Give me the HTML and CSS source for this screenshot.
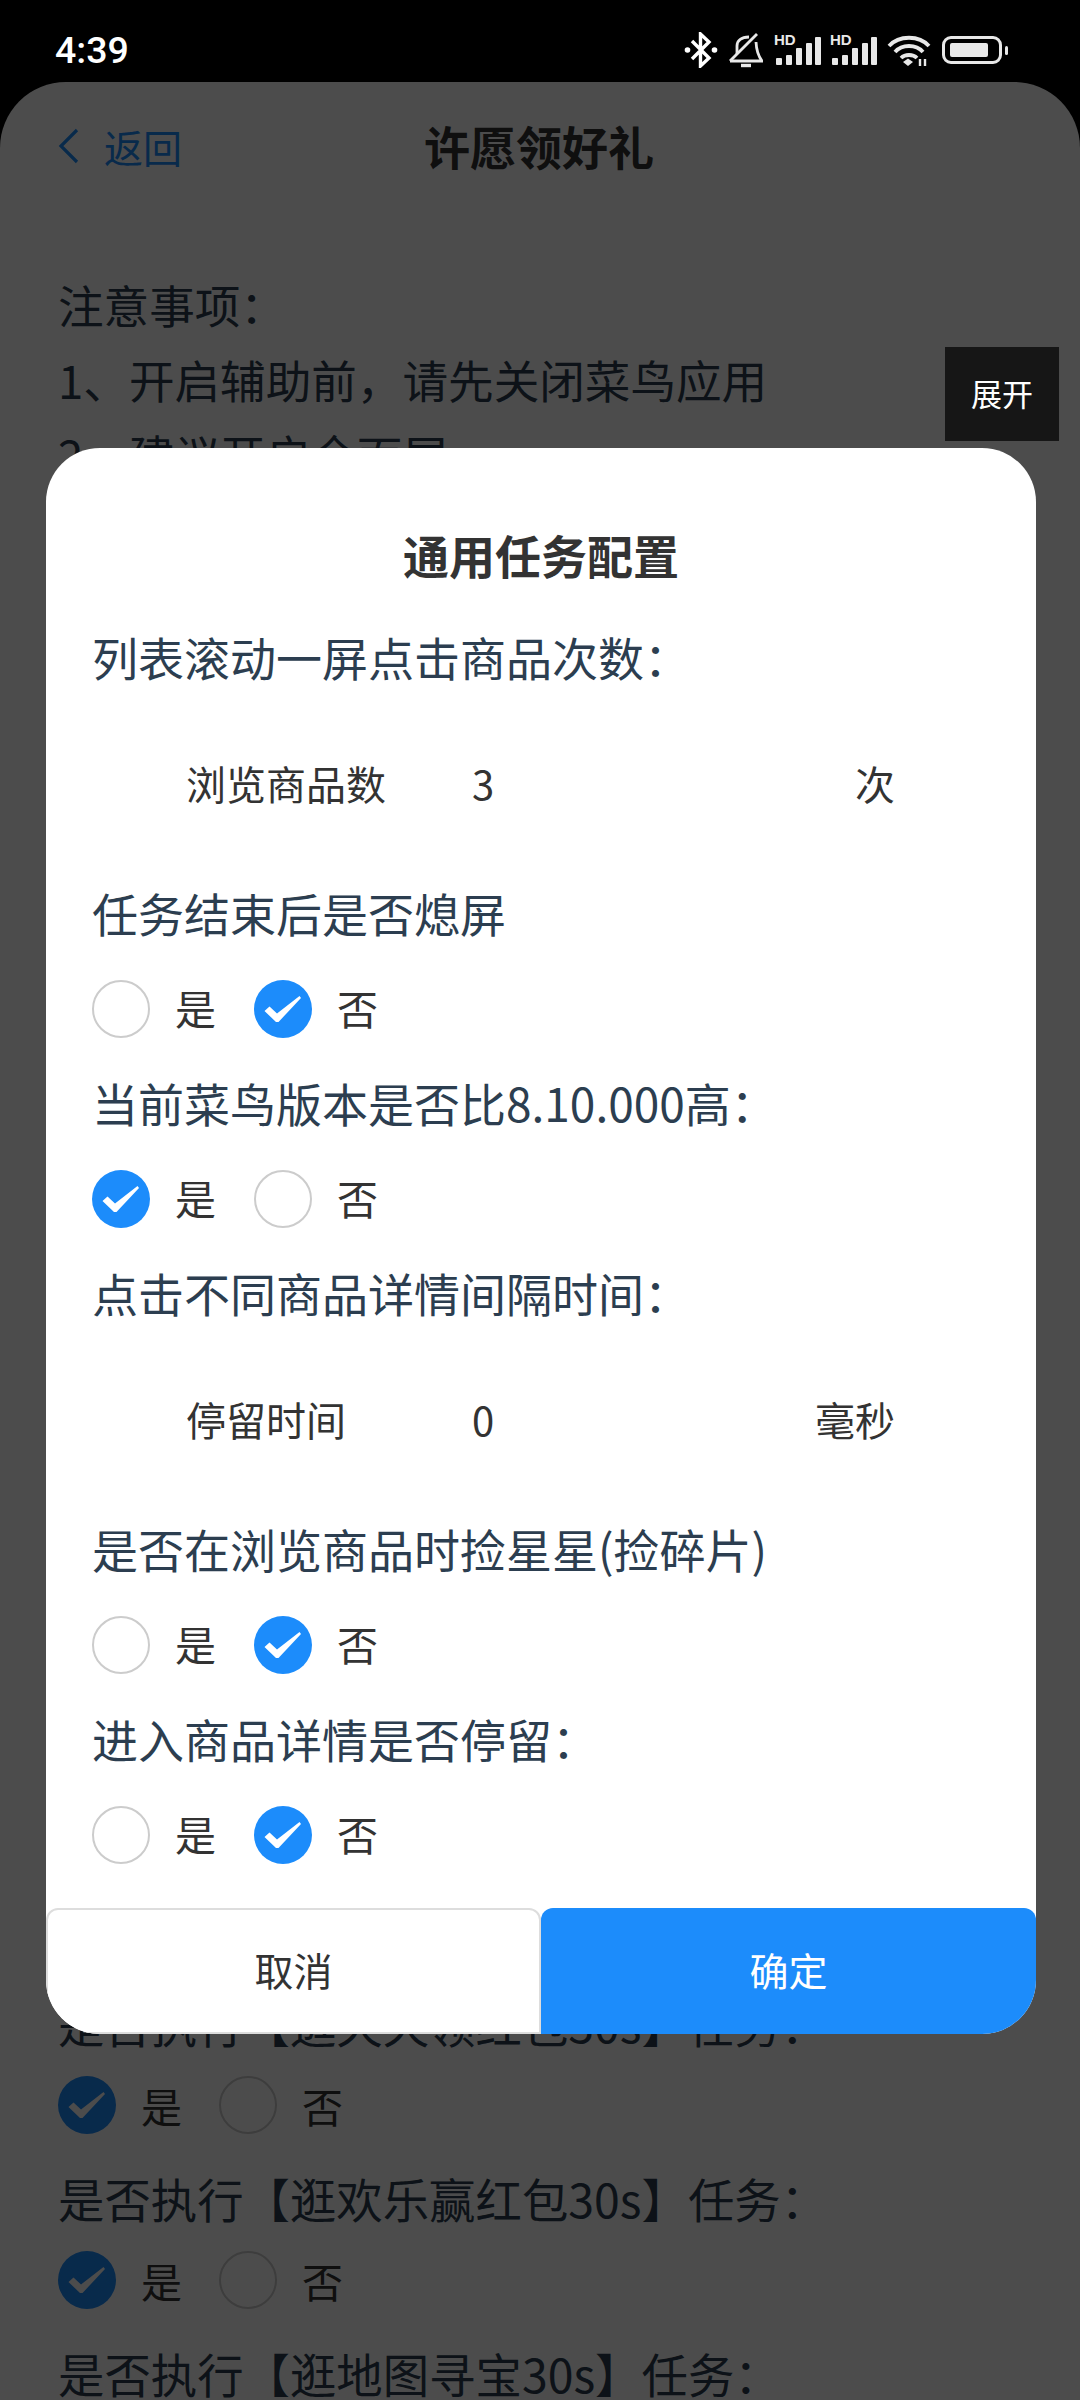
FILE: index.html
```html
<!DOCTYPE html>
<html lang="zh-CN">
<head>
    <meta charset="UTF-8">
    <meta name="viewport" content="width=device-width, initial-scale=1.0">
    <title>许愿领好礼</title>
    <link rel="stylesheet" href="styles.css">
</head>
<body>
    <svg class="defs" width="0" height="0">
        <symbol id="check" viewBox="0 0 58 58">
            <path d="M10.5 31 L15.5 26.5 L23 33.5 L45.5 16 L47 18 L24.5 42 L22 42 Z" fill="#fff"/>
        </symbol>
        <symbol id="signal" viewBox="0 0 47 30">
            <rect x="2" y="23" width="6" height="7" rx="1" fill="#e8e8e8"/>
            <rect x="12" y="20" width="6" height="10" rx="1" fill="#e8e8e8"/>
            <rect x="22" y="13" width="6" height="17" rx="1" fill="#e8e8e8"/>
            <rect x="32" y="8" width="6" height="22" rx="1" fill="#e8e8e8"/>
            <rect x="41" y="2" width="6" height="28" rx="1" fill="#e8e8e8"/>
        </symbol>
    </svg>

    <div class="status-bar">
        <span class="clock">4:39</span>
        <div class="status-icons">
            <svg width="34" height="36" viewBox="0 0 34 36" fill="none" stroke="#fff" stroke-width="3.4">
                <path d="M8 9 L25 26 L16.5 34 V2 L25 10 L8 27"/>
                <circle cx="3.5" cy="18" r="2.8" fill="#fff" stroke="none"/>
                <circle cx="30.5" cy="18" r="2.8" fill="#fff" stroke="none"/>
            </svg>
            <svg width="34" height="36" viewBox="0 0 34 36" fill="none" stroke="#e8e8e8" stroke-width="2.8">
                <path d="M1 29 H33 C30 25 27.5 20 27 10"/>
                <path d="M8 22 V14 C8 9 12 5 20 5"/>
                <path d="M1 29 L28 2"/>
                <path d="M12 33.5 H22" stroke-width="3.4"/>
            </svg>
            <div class="signal">
                <span class="hd">HD</span>
                <svg width="47" height="30"><use href="#signal"/></svg>
            </div>
            <div class="signal signal-second">
                <span class="hd">HD</span>
                <svg width="47" height="30"><use href="#signal"/></svg>
            </div>
            <svg class="wifi" width="44" height="32" viewBox="0 0 44 32" fill="none" stroke="#e8e8e8" stroke-width="3.8">
                <path d="M2 12 C12 1 32 1 42 12"/>
                <path d="M8 18 C15 10 29 10 36 18"/>
                <path d="M14 24 C18 20 26 20 30 24"/>
                <path d="M16 28 L21 24.5 L26 28 L21 32 Z" fill="#e8e8e8" stroke="none"/>
                <path d="M33 32 V25 M38 32 V25" stroke-width="2.4"/>
            </svg>
            <div class="battery"><span class="battery-fill"></span></div>
            <span class="battery-nub"></span>
        </div>
    </div>

    <div class="page">
        <div class="page-header">
            <div class="back">
                <svg width="22" height="36" viewBox="0 0 22 36" fill="none" stroke="#1c8cfb" stroke-width="3.2">
                    <path d="M19 2 L3 18 L19 34"/>
                </svg>
                <span>返回</span>
            </div>
            <h1 class="page-title">许愿领好礼</h1>
        </div>

        <div class="notes">
            <p>注意事项：</p>
            <p>1、开启辅助前，请先关闭菜鸟应用</p>
            <p>2、建议开启全面屏</p>
        </div>

        <div class="task-list">
            <div class="task">
                <p class="task-name">是否执行【逛天天领红包30s】任务：</p>
                <div class="task-options">
                    <span class="radio checked"><svg><use href="#check"/></svg></span><span class="task-opt">是</span>
                    <span class="radio"></span><span class="task-opt">否</span>
                </div>
            </div>
            <div class="task">
                <p class="task-name">是否执行【逛欢乐赢红包30s】任务：</p>
                <div class="task-options">
                    <span class="radio checked"><svg><use href="#check"/></svg></span><span class="task-opt">是</span>
                    <span class="radio"></span><span class="task-opt">否</span>
                </div>
            </div>
            <div class="task">
                <p class="task-name">是否执行【逛地图寻宝30s】任务：</p>
            </div>
        </div>
    </div>

    <div class="scrim"></div>

    <button class="expand">展开</button>

    <div class="dialog">
        <h2 class="dialog-title">通用任务配置</h2>

        <div class="dialog-body">
            <div class="field-label">列表滚动一屏点击商品次数：</div>
            <div class="input-row">
                <span class="input-name">浏览商品数</span>
                <span class="input-value">3</span>
                <span class="input-unit">次</span>
            </div>

            <div class="field-label">任务结束后是否熄屏</div>
            <div class="radio-row">
                <span class="radio"></span><span class="radio-text">是</span>
                <span class="radio checked"><svg><use href="#check"/></svg></span><span class="radio-text">否</span>
            </div>

            <div class="field-label">当前菜鸟版本是否比8.10.000高：</div>
            <div class="radio-row">
                <span class="radio checked"><svg><use href="#check"/></svg></span><span class="radio-text">是</span>
                <span class="radio"></span><span class="radio-text">否</span>
            </div>

            <div class="field-label">点击不同商品详情间隔时间：</div>
            <div class="input-row">
                <span class="input-name">停留时间</span>
                <span class="input-value">0</span>
                <span class="input-unit">毫秒</span>
            </div>

            <div class="field-label">是否在浏览商品时捡星星(捡碎片)</div>
            <div class="radio-row">
                <span class="radio"></span><span class="radio-text">是</span>
                <span class="radio checked"><svg><use href="#check"/></svg></span><span class="radio-text">否</span>
            </div>

            <div class="field-label">进入商品详情是否停留：</div>
            <div class="radio-row">
                <span class="radio"></span><span class="radio-text">是</span>
                <span class="radio checked"><svg><use href="#check"/></svg></span><span class="radio-text">否</span>
            </div>
        </div>

        <div class="dialog-buttons">
            <button class="btn btn-cancel">取消</button>
            <button class="btn btn-ok">确定</button>
        </div>
    </div>
</body>
</html>
```
FILE: styles.css
```css
* {
    box-sizing: border-box;
}
html, body {
    margin: 0;
    padding: 0;
}
body {
    position: relative;
    width: 1080px;
    height: 2400px;
    overflow: hidden;
    background: #000;
    font-family: "Noto Sans CJK SC", "Noto Sans", sans-serif;
    color: #2c3e50;
}
p, h1, h2 {
    margin: 0;
}
.defs {
    position: absolute;
}

/* status bar */
.status-bar {
    position: relative;
    z-index: 3;
    height: 82px;
    padding: 18px 72px 0 55px;
    display: flex;
    align-items: center;
    justify-content: space-between;
    color: #fff;
}
.clock {
    font-family: Roboto, sans-serif;
    font-size: 37.5px;
    font-weight: 500;
}
.status-icons {
    display: flex;
    align-items: center;
    gap: 11px;
}
.signal {
    position: relative;
    width: 47px;
    height: 30px;
}
.signal-second {
    margin-left: -2px;
}
.signal svg {
    display: block;
}
.wifi {
    margin-left: -1px;
}
.hd {
    position: absolute;
    left: 0;
    top: -2px;
    font-family: "Liberation Sans", sans-serif;
    font-size: 15px;
    font-weight: 700;
    line-height: 14px;
    color: #e8e8e8;
}
.battery {
    width: 60px;
    height: 28px;
    padding: 4px 5px;
    border: 3px solid #e8e8e8;
    border-radius: 9px;
}
.battery-fill {
    display: block;
    width: 38px;
    height: 14px;
    background: #e8e8e8;
    border-radius: 2px;
}
.battery-nub {
    width: 3px;
    height: 9px;
    margin-left: -8px;
    background: #e8e8e8;
    border-radius: 2px;
}

/* page under the dialog */
.page {
    height: 2318px;
    padding: 0 60px 0 58px;
    display: flex;
    flex-direction: column;
    overflow: hidden;
    background: #fff;
    border-radius: 66px 66px 0 0;
}
.page-header {
    position: relative;
    height: 130px;
    flex: none;
    display: flex;
    align-items: center;
    justify-content: center;
}
.back {
    position: absolute;
    left: 0;
    top: 44px;
    display: flex;
    align-items: center;
    gap: 24px;
    font-size: 39px;
    line-height: 40px;
    color: #1c8cfb;
}
.page-title {
    padding-bottom: 4px;
    font-size: 46px;
    font-weight: 700;
    color: #333;
}
.notes {
    margin-top: 55px;
    font-size: 45.6px;
    line-height: 75px;
}
.task-list {
    margin-top: auto;
    margin-bottom: -110px;
}
.task {
    height: 175px;
}
.task-name {
    height: 80px;
    font-size: 46.4px;
    line-height: 76px;
}
.task-options {
    display: flex;
    align-items: center;
    height: 80px;
    font-size: 41px;
    color: #333;
}
.task-opt {
    margin: 0 37px 0 25px;
}

.scrim {
    position: absolute;
    inset: 0;
    z-index: 1;
    background: rgba(0, 0, 0, 0.7);
}

.expand {
    position: absolute;
    z-index: 2;
    left: 945px;
    top: 347px;
    width: 114px;
    height: 94px;
    padding: 0 0 3px;
    border: 0;
    background: #161616;
    color: #fff;
    font-family: inherit;
    font-size: 31px;
}

/* config dialog */
.dialog {
    position: absolute;
    z-index: 2;
    left: 46px;
    top: 448px;
    width: 990px;
    height: 1586px;
    overflow: hidden;
    background: #fff;
    border-radius: 54px;
}
.dialog-title {
    height: 162px;
    padding-top: 76px;
    text-align: center;
    font-size: 46px;
    font-weight: 700;
    line-height: 60px;
    color: #333;
}
.dialog-body {
    height: 1298px;
    padding: 0 46px;
}
.field-label {
    height: 95px;
    font-size: 46px;
    line-height: 92px;
}
.input-row {
    height: 161px;
    padding: 0 95px 5px 94px;
    display: flex;
    align-items: center;
    font-size: 40px;
    color: #333;
}
.input-name {
    width: 286px;
}
.input-value {
    flex: 1;
}
.radio-row {
    height: 95px;
    display: flex;
    align-items: center;
    font-size: 41px;
    color: #333;
}
.radio {
    width: 58px;
    height: 58px;
    flex: none;
    border: 2px solid #ccc;
    border-radius: 50%;
}
.radio.checked {
    border: 0;
    background: #1c8cfb;
}
.radio svg {
    display: block;
    width: 58px;
    height: 58px;
}
.radio-text {
    width: 104px;
    padding: 0 0 3px 25px;
}
.dialog-buttons {
    height: 126px;
    display: flex;
}
.btn {
    width: 50%;
    padding: 0 0 5px;
    font-family: inherit;
    font-size: 39px;
    border-radius: 12px 12px 0 0;
}
.btn-cancel {
    background: #fff;
    color: #333;
    border: 2px solid #ddd;
}
.btn-ok {
    background: #1c8cfb;
    color: #fff;
    border: 0;
}
```
